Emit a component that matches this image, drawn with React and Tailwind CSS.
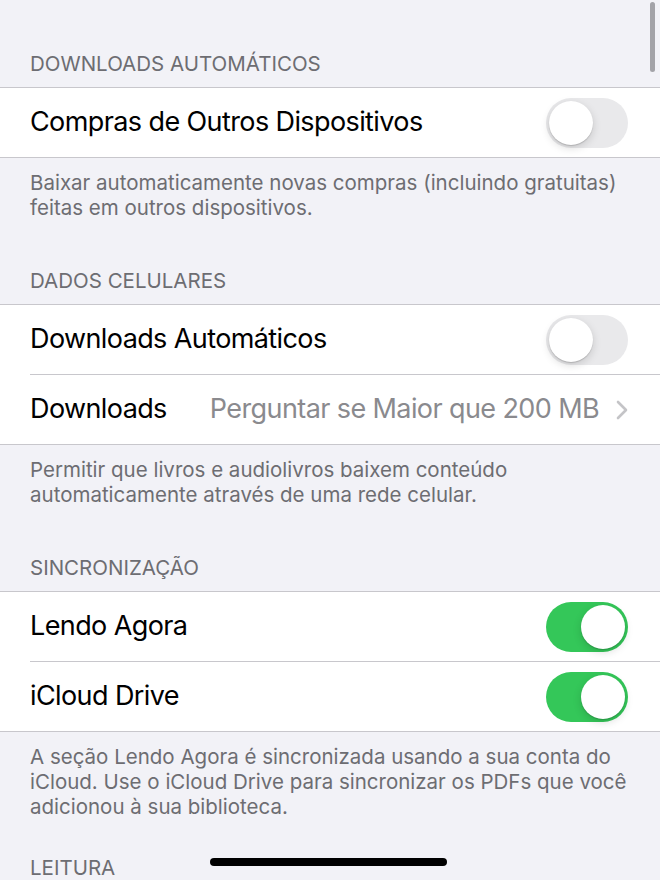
// App.jsx
// iOS settings page — Livros: downloads, dados celulares, sincronização

const Toggle = ({ on }) => (
  <div
    className={`w-[82px] h-[50px] rounded-full p-[3px] flex ${
      on ? 'bg-[#34c759] justify-end' : 'bg-[#e9e9eb] justify-start'
    }`}
  >
    <div className="w-[44px] h-[44px] rounded-full bg-white shadow-[0_3px_8px_rgba(0,0,0,0.15),0_1px_1px_rgba(0,0,0,0.16)]"></div>
  </div>
)

const Header = ({ children, top }) => (
  <div className={`px-[30px] pb-[11px] text-[20.5px] leading-[25px] text-[#6d6d72] uppercase ${top}`}>
    {children}
  </div>
)

const Footer = ({ children }) => (
  <div className="px-[30px] pt-[12px] text-[20.5px] leading-[25px] text-[#6d6d72]">
    {children}
  </div>
)

const Row = ({ label, children, last }) => (
  <div className="pl-[30px] bg-white">
    <div
      className={`pr-[32px] flex items-center justify-between ${
        last ? 'h-[69px]' : 'h-[70px] border-b border-[#c8c7cc]'
      }`}
    >
      <span className="text-[27px] text-black tracking-[-0.6px]">{label}</span>
      {children}
    </div>
  </div>
)

const Group = ({ children }) => (
  <div className="bg-white border-y border-[#c8c7cc]">{children}</div>
)

export default function App() {
  return (
    <div
      className="w-[660px] h-[880px] bg-[#f2f2f7] overflow-hidden relative"
      style={{ fontFamily: 'Inter, "Noto Sans", sans-serif' }}
    >
      {/* Downloads automáticos */}
      <Header top="pt-[51px]">Downloads Automáticos</Header>
      <Group>
        <Row label="Compras de Outros Dispositivos" last>
          <Toggle on={false} />
        </Row>
      </Group>
      <Footer>
        Baixar automaticamente novas compras (incluindo gratuitas)
        <br />
        feitas em outros dispositivos.
      </Footer>

      {/* Dados celulares */}
      <Header top="pt-[48px]">Dados Celulares</Header>
      <Group>
        <Row label="Downloads Automáticos">
          <Toggle on={false} />
        </Row>
        <Row label="Downloads" last>
          <div className="flex items-center gap-[17px]">
            <span className="text-[27px] text-[#8a8a8e] tracking-[-0.6px]">
              Perguntar se Maior que 200 MB
            </span>
            <svg width="12" height="20" viewBox="0 0 12 20" fill="none">
              <path
                d="M2 2l8 8-8 8"
                stroke="#c4c4c7"
                strokeWidth="2.6"
                strokeLinecap="round"
                strokeLinejoin="round"
              />
            </svg>
          </div>
        </Row>
      </Group>
      <Footer>
        Permitir que livros e audiolivros baixem conteúdo
        <br />
        automaticamente através de uma rede celular.
      </Footer>

      {/* Sincronização */}
      <Header top="pt-[48px]">Sincronização</Header>
      <Group>
        <Row label="Lendo Agora">
          <Toggle on />
        </Row>
        <Row label="iCloud Drive" last>
          <Toggle on />
        </Row>
      </Group>
      <Footer>
        A seção Lendo Agora é sincronizada usando a sua conta do
        <br />
        iCloud. Use o iCloud Drive para sincronizar os PDFs que você
        <br />
        adicionou à sua biblioteca.
      </Footer>

      {/* Leitura */}
      <Header top="pt-[36px]">Leitura</Header>

      {/* scroll indicator */}
      <div className="absolute right-[5px] top-[2px] w-[5px] h-[70px] rounded-full bg-[#a3a3a8]"></div>

      {/* home indicator */}
      <div className="absolute left-[210px] top-[858px] w-[237px] h-[8px] rounded-full bg-black"></div>
    </div>
  )
}
